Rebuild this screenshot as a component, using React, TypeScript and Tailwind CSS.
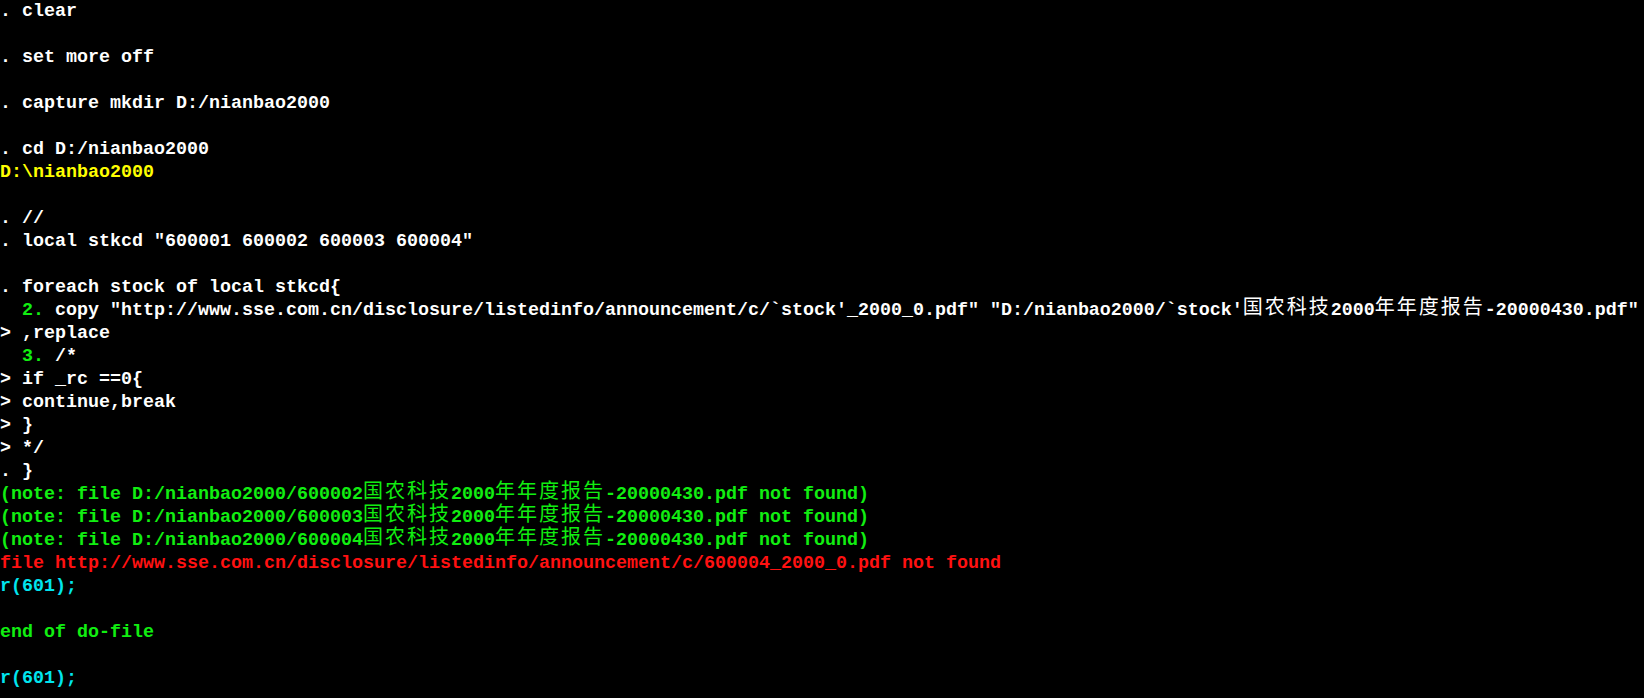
import React from "react";

type Seg = { t: string; c?: string; cjk?: boolean };

const W = "text-white";
const Y = "text-[#ffff00]";
const G = "text-[#11ee11]";
const R = "text-[#ff1111]";
const C = "text-[#00e5ee]";

function split(t: string, c: string): Seg[] {
  const out: Seg[] = [];
  const re = /([\u4e00-\u9fff]+)/;
  t.split(re).forEach((p) => {
    if (!p) return;
    out.push({ t: p, c, cjk: re.test(p) });
  });
  return out;
}

const lines: Seg[][] = [
  split(". clear", W),
  [],
  split(". set more off", W),
  [],
  split(". capture mkdir D:/nianbao2000", W),
  [],
  split(". cd D:/nianbao2000", W),
  split("D:\\nianbao2000", Y),
  [],
  split(". //", W),
  split('. local stkcd "600001 600002 600003 600004"', W),
  [],
  split(". foreach stock of local stkcd{", W),
  [
    ...split("  2.", G),
    ...split(
      ' copy "http://www.sse.com.cn/disclosure/listedinfo/announcement/c/`stock\'_2000_0.pdf" "D:/nianbao2000/`stock\'国农科技2000年年度报告-20000430.pdf"',
      W
    ),
  ],
  split("> ,replace", W),
  [...split("  3.", G), ...split(" /*", W)],
  split("> if _rc ==0{", W),
  split("> continue,break", W),
  split("> }", W),
  split("> */", W),
  split(". }", W),
  split("(note: file D:/nianbao2000/600002国农科技2000年年度报告-20000430.pdf not found)", G),
  split("(note: file D:/nianbao2000/600003国农科技2000年年度报告-20000430.pdf not found)", G),
  split("(note: file D:/nianbao2000/600004国农科技2000年年度报告-20000430.pdf not found)", G),
  split("file http://www.sse.com.cn/disclosure/listedinfo/announcement/c/600004_2000_0.pdf not found", R),
  split("r(601);", C),
  [],
  split("end of do-file", G),
  [],
  split("r(601);", C),
];

export default function App() {
  return (
    <div className="w-full min-h-screen bg-black overflow-hidden">
      <div className="font-['Liberation_Mono','Noto_Sans_CJK_SC',monospace] font-bold text-[18.33px] leading-[23px]">
        {lines.map((l, i) => (
          <div key={i} className="h-[23px] whitespace-pre">
            {l.map((s, j) =>
              s.cjk ? (
                <span
                  key={j}
                  className={`${s.c} relative -top-[1px] font-['Noto_Sans_CJK_SC',sans-serif] font-normal text-[20px] tracking-[2px] leading-[0px]`}
                >
                  {s.t}
                </span>
              ) : (
                <span key={j} className={s.c}>
                  {s.t}
                </span>
              )
            )}
          </div>
        ))}
      </div>
    </div>
  );
}
